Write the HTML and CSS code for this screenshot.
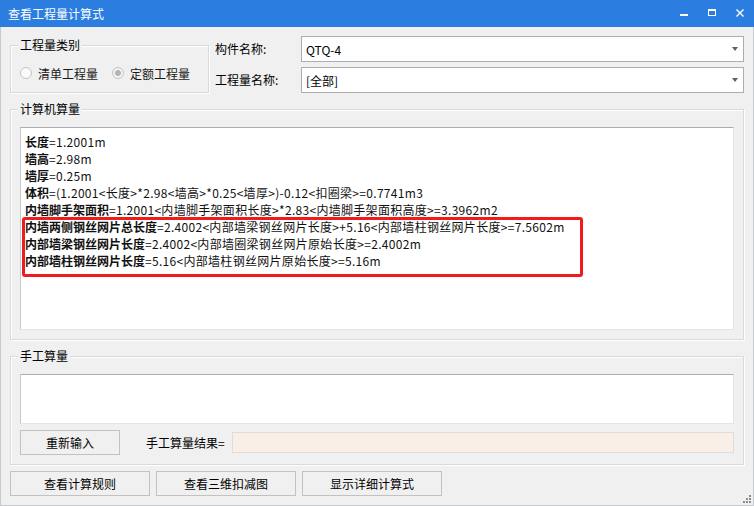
FILE: index.html
```html
<!DOCTYPE html>
<html lang="zh-CN">
<head>
  <meta charset="UTF-8" />
  <title>查看工程量计算式</title>
  <link rel="stylesheet" href="styles.css">
</head>
<body>
  <div class="window">
    <div class="titlebar">
      <span class="title">查看工程量计算式</span>
      <div class="controls">
        <span class="ctl">
          <svg width="10" height="10" viewBox="0 0 10 10"><rect x="1" y="6" width="8" height="2" fill="#fff"/></svg>
        </span>
        <span class="ctl">
          <svg width="10" height="10" viewBox="0 0 10 10"><rect x="1.5" y="1.5" width="7" height="6" fill="none" stroke="#fff"/><rect x="1" y="1" width="8" height="2" fill="#fff"/></svg>
        </span>
        <span class="ctl">
          <svg width="10" height="10" viewBox="0 0 10 10"><path d="M1.5 1.5 L8.5 8.5 M8.5 1.5 L1.5 8.5" stroke="#fff" stroke-width="1.4"/></svg>
        </span>
      </div>
    </div>

    <div class="main">
      <div class="top-row">
        <div class="group type-group">
          <div class="group-title">工程量类别</div>
          <div class="radios">
            <span class="radio"></span><span class="radio-label">清单工程量</span>
            <span class="radio checked"></span><span class="radio-label">定额工程量</span>
          </div>
        </div>
        <div class="fields">
          <span class="field-label">构件名称:</span>
          <div class="combo"><span>QTQ-4</span><span class="arrow"></span></div>
          <span class="field-label">工程量名称:</span>
          <div class="combo"><span>[全部]</span><span class="arrow"></span></div>
        </div>
      </div>

      <div class="group calc-group">
        <div class="group-title">计算机算量</div>
        <div class="box formula">
          <div><b>长度</b>=1.2001m</div>
          <div><b>墙高</b>=2.98m</div>
          <div><b>墙厚</b>=0.25m</div>
          <div><b>体积</b>=(1.2001&lt;长度&gt;*2.98&lt;墙高&gt;*0.25&lt;墙厚&gt;)-0.12&lt;扣圈梁&gt;=0.7741m3</div>
          <div><b>内墙脚手架面积</b>=1.2001&lt;内墙脚手架面积长度&gt;*2.83&lt;内墙脚手架面积高度&gt;=3.3962m2</div>
          <div><b>内墙两侧钢丝网片总长度</b>=2.4002&lt;内部墙梁钢丝网片长度&gt;+5.16&lt;内部墙柱钢丝网片长度&gt;=7.5602m</div>
          <div><b>内部墙梁钢丝网片长度</b>=2.4002&lt;内部墙圈梁钢丝网片原始长度&gt;=2.4002m</div>
          <div><b>内部墙柱钢丝网片长度</b>=5.16&lt;内部墙柱钢丝网片原始长度&gt;=5.16m</div>
          <span class="mark"></span>
        </div>
      </div>

      <div class="group manual-group">
        <div class="group-title">手工算量</div>
        <div class="box manual-input"></div>
        <div class="manual-row">
          <button class="btn reset-btn">重新输入</button>
          <span class="result-label">手工算量结果=</span>
          <div class="result"></div>
        </div>
      </div>

      <div class="actions">
        <button class="btn action-btn">查看计算规则</button>
        <button class="btn action-btn">查看三维扣减图</button>
        <button class="btn action-btn">显示详细计算式</button>
      </div>
    </div>

    <svg class="grip" width="9" height="9" viewBox="0 0 9 9">
      <rect x="6" y="0" width="2" height="2" fill="#8c8c8c"/>
      <rect x="3" y="3" width="2" height="2" fill="#8c8c8c"/>
      <rect x="6" y="3" width="2" height="2" fill="#8c8c8c"/>
      <rect x="0" y="6" width="2" height="2" fill="#8c8c8c"/>
      <rect x="3" y="6" width="2" height="2" fill="#8c8c8c"/>
      <rect x="6" y="6" width="2" height="2" fill="#8c8c8c"/>
    </svg>
  </div>
</body>
</html>
```

FILE: styles.css
```css
* {
  box-sizing: border-box;
}

body {
  margin: 0;
  font-family: "Noto Sans CJK SC", "Noto Sans", sans-serif;
  font-size: 12px;
  color: #000;
  background: #f0f0f0;
}

.window {
  position: relative;
  width: 754px;
  height: 506px;
  display: flex;
  flex-direction: column;
  background: #f0f0f0;
  border: 1px solid #c5cad3;
  border-top: none;
}

.titlebar {
  height: 27px;
  margin: 0 -1px;
  display: flex;
  align-items: center;
  justify-content: space-between;
  background: #2b7ee0;
  color: #fff;
  padding-left: 8px;
}

.title {
  font-size: 12px;
  line-height: 14px;
}

.controls {
  display: flex;
  align-self: stretch;
}

.ctl {
  width: 28px;
  display: flex;
  align-items: center;
  justify-content: center;
  padding-bottom: 2px;
}

.main {
  flex: 1;
  padding: 9px 9px 0 9px;
}

.top-row {
  display: flex;
  align-items: flex-start;
}

.group {
  border: 1px solid #d9d9d9;
  box-shadow: inset 1px 1px 0 #fff, 1px 1px 0 #fff;
}

.group-title {
  width: fit-content;
  margin: -8px 0 0 -2px;
  padding: 0 2px;
  line-height: 14px;
  background: #f0f0f0;
}

.type-group {
  width: 199px;
  margin-top: 9px;
  padding: 0 0 12px 9px;
}

.radios {
  display: flex;
  align-items: center;
  height: 14px;
  margin-top: 14px;
}

.radio {
  width: 12px;
  height: 12px;
  border: 1px solid #c4c4c4;
  border-radius: 50%;
  background: #fafafa;
}

.radio.checked {
  background: radial-gradient(circle, #b3b3b3 0 2.6px, #f2f2f2 3.2px);
}

.radio-label {
  margin: 0 14px 0 6px;
  color: #1a1a1a;
}

.fields {
  flex: 1;
  display: grid;
  grid-template-columns: 86px 1fr;
  grid-auto-rows: 26px;
  row-gap: 5px;
  align-items: center;
  margin-left: 6px;
}

.field-label {
  padding-bottom: 1px;
}

.combo {
  height: 26px;
  display: flex;
  align-items: center;
  justify-content: space-between;
  padding: 0 5px 0 4px;
  background: #fff;
  border: 1px solid #adadad;
}

.arrow {
  width: 0;
  height: 0;
  border-left: 3px solid transparent;
  border-right: 3px solid transparent;
  border-top: 4px solid #606060;
}

.calc-group {
  margin-top: 16px;
  padding: 0 9px 9px 9px;
}

.box {
  background: #fff;
  border: 1px solid #e2e6ea;
  border-top-color: #abadb3;
  border-left-color: #c8cacf;
}

.formula {
  position: relative;
  height: 203px;
  margin-top: 11px;
  padding: 5px 0 0 4px;
  line-height: 17px;
  letter-spacing: 0.3px;
  white-space: nowrap;
  color: #111;
}

.formula b {
  font-weight: bold;
  letter-spacing: 0;
}

.mark {
  position: absolute;
  left: 1px;
  top: 89px;
  width: 561px;
  height: 60px;
  border: 3px solid #f01c1c;
  border-radius: 3px;
}

.manual-group {
  margin-top: 16px;
  padding: 0 9px 9px 9px;
}

.manual-input {
  height: 50px;
  margin-top: 11px;
}

.manual-row {
  display: flex;
  align-items: center;
  margin-top: 6px;
}

.btn {
  font-family: inherit;
  font-size: 12px;
  color: #000;
  height: 25px;
  padding: 0;
  background: #f0f0f0;
  border: 1px solid #c2c2c2;
}

.reset-btn {
  width: 100px;
}

.result-label {
  width: 86px;
  margin-left: 26px;
}

.result {
  flex: 1;
  height: 21px;
  background: #faefe6;
  border: 1px solid #dddddd;
}

.actions {
  display: flex;
  gap: 6px;
  margin-top: 6px;
}

.action-btn {
  width: 140px;
}

.grip {
  position: absolute;
  right: 1px;
  bottom: 1px;
}
```
